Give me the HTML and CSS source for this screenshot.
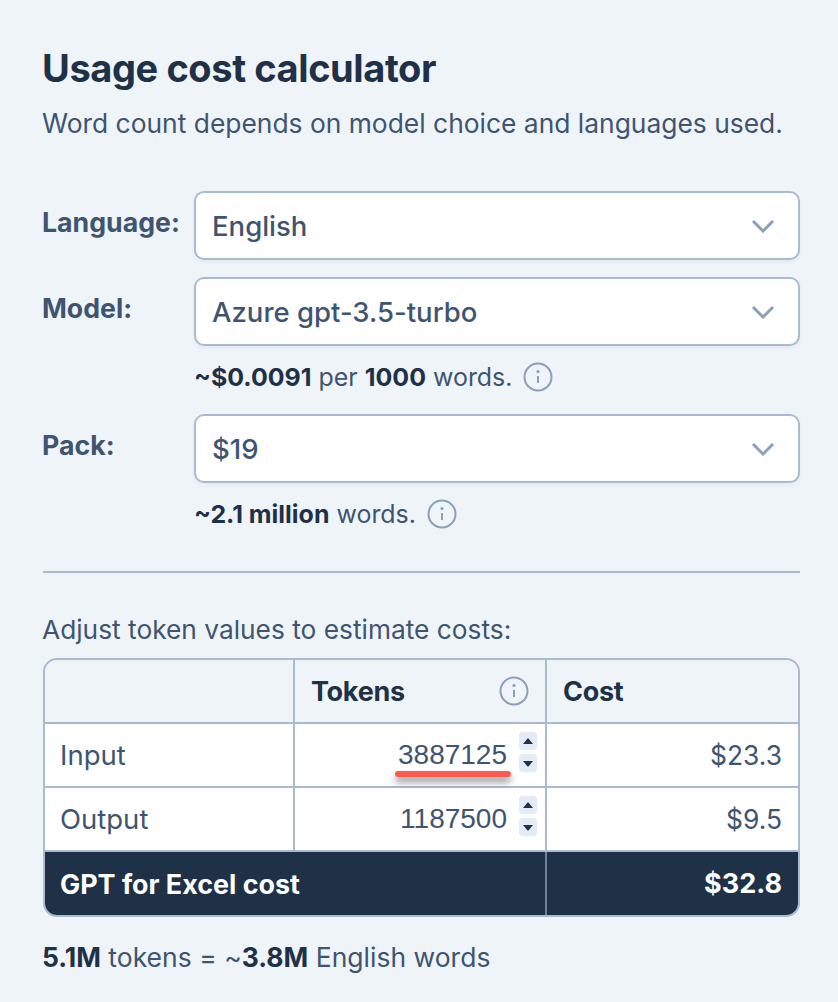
FILE: index.html
```html
<!DOCTYPE html>
<html lang="en">
<head>
<meta charset="utf-8">
<title>Usage cost calculator</title>
<link rel="stylesheet" href="styles.css">
</head>
<body>
<main class="calc">
  <h1 class="title">Usage cost calculator</h1>
  <p class="sub">Word count depends on model choice and languages used.</p>

  <div class="form">
    <div class="field">
      <label class="label">Language:</label>
      <div class="control">
        <div class="select"><span>English</span>
          <svg class="chev" viewBox="0 0 24 14"><path d="M2 2l10 10L22 2"/></svg></div>
      </div>
    </div>
    <div class="field">
      <label class="label">Model:</label>
      <div class="control">
        <div class="select"><span>Azure gpt-3.5-turbo</span>
          <svg class="chev" viewBox="0 0 24 14"><path d="M2 2l10 10L22 2"/></svg></div>
        <p class="note"><span><b>~$0.0091</b> per <b>1000</b> words.</span>
          <svg class="info" viewBox="0 0 30 30"><circle cx="15" cy="15" r="13.5"/><path d="M15 14v7"/><circle class="dot" cx="15" cy="9.5" r="1.6"/></svg></p>
      </div>
    </div>
    <div class="field">
      <label class="label">Pack:</label>
      <div class="control">
        <div class="select"><span>$19</span>
          <svg class="chev" viewBox="0 0 24 14"><path d="M2 2l10 10L22 2"/></svg></div>
        <p class="note"><span><b>~2.1 million</b> words.</span>
          <svg class="info" viewBox="0 0 30 30"><circle cx="15" cy="15" r="13.5"/><path d="M15 14v7"/><circle class="dot" cx="15" cy="9.5" r="1.6"/></svg></p>
      </div>
    </div>
  </div>

  <hr class="rule">

  <p class="adjust">Adjust token values to estimate costs:</p>

  <div class="table">
    <div class="row head">
      <div class="cell"></div>
      <div class="cell tokens-head"><span>Tokens</span>
        <svg class="info" viewBox="0 0 30 30"><circle cx="15" cy="15" r="13.5"/><path d="M15 14v7"/><circle class="dot" cx="15" cy="9.5" r="1.6"/></svg></div>
      <div class="cell">Cost</div>
    </div>
    <div class="row">
      <div class="cell">Input</div>
      <div class="cell num">
        <span class="value active">3887125</span>
        <span class="spin"><i class="up"></i><i class="down"></i></span>
      </div>
      <div class="cell right amount">$23.3</div>
    </div>
    <div class="row">
      <div class="cell">Output</div>
      <div class="cell num">
        <span class="value">1187500</span>
        <span class="spin"><i class="up"></i><i class="down"></i></span>
      </div>
      <div class="cell right amount">$9.5</div>
    </div>
    <div class="row total">
      <div class="cell wide">GPT for Excel cost</div>
      <div class="cell right">$32.8</div>
    </div>
  </div>

  <p class="summary"><b>5.1M</b> tokens = ~<b>3.8M</b> English words</p>
</main>
</body>
</html>
```
FILE: styles.css
```css
* { box-sizing: border-box; }
html, body { margin: 0; padding: 0; }
body {
  background: #eff4f9;
  color: #3e5470;
  font-family: Inter, "Liberation Sans", sans-serif;
  width: 838px;
  height: 1002px;
  overflow: hidden;
}
.calc { padding: 46px 38px 0 43px; }
.title { margin: 0 0 0 -1px; font-size: 38px; line-height: 44px; font-weight: 700; color: #1f3147; letter-spacing: -0.4px; }
.sub { margin: 15px 0 0 -1px; font-size: 26.4px; line-height: 36px; }
.form { margin-top: 50px; display: flex; flex-direction: column; gap: 17px; }
.field { display: flex; }
.label { width: 151px; flex: none; margin-left: -1px; margin-right: 1px; font-size: 26.7px; line-height: 36px; padding-top: 13px; font-weight: 700; }
.control { flex: 1; }
.select {
  height: 69px;
  background: #fff;
  border: 2px solid #a8bbd0;
  border-radius: 10px;
  box-shadow: 0 2px 4px rgba(30, 50, 80, 0.06);
  padding: 0 17px 0 16px;
  display: flex;
  align-items: center;
  justify-content: space-between;
  font-size: 27.5px;
  font-weight: 500;
}
.chev { width: 24px; height: 14px; fill: none; stroke: #8ba0b8; stroke-width: 3; margin-right: 6px; }
.note { margin: 13px 0 2px; font-size: 24.95px; line-height: 36px; display: flex; align-items: center; gap: 11px; }
.note b { color: #1f3147; font-weight: 700; }
.info { width: 30px; height: 30px; fill: none; stroke: #8ba0b8; stroke-width: 2; flex: none; }
.info .dot { fill: #8ba0b8; stroke: none; }
.rule { margin: 37px 0 0; border: 0; border-top: 2px solid #a8bbd0; }
.adjust { margin: 39px 0 0 -1px; font-size: 26.3px; line-height: 36px; }
.table {
  margin-top: 10px;
  border: 2px solid #a8bbd0;
  border-radius: 14px;
  overflow: hidden;
  background: #fff;
}
.row { display: grid; grid-template-columns: 250px 252px 1fr; height: 64px; border-bottom: 2px solid #a8bbd0; font-size: 27.5px; }
.row:last-child { border-bottom: 0; height: 63px; }
.cell { display: flex; align-items: center; padding: 0 16px; border-right: 2px solid #a8bbd0; }
.cell:first-child { padding-left: 15px; }
.cell:last-child { border-right: 0; }
.head { background: #eff4f9; color: #1f3147; font-weight: 700; font-size: 27px; letter-spacing: -0.3px; }
.tokens-head { justify-content: space-between; }
.right { justify-content: flex-end; }
.amount { font-size: 26.4px; }
.num { justify-content: flex-end; gap: 12px; padding-right: 8px; font-size: 28px; font-family: "Liberation Sans", sans-serif; }
.value { position: relative; }
.value.active::after {
  content: "";
  position: absolute;
  left: -3px;
  right: -4px;
  bottom: -6px;
  height: 6px;
  border-radius: 3px;
  background: #fe5a4f;
  box-shadow: 0 5px 7px rgba(0, 0, 0, 0.45);
}
.spin { display: flex; flex-direction: column; gap: 4px; margin-bottom: 6px; }
.spin i { width: 18px; height: 18px; border-radius: 4px; background: #e3ecf5; position: relative; display: block; }
.spin i::after {
  content: "";
  position: absolute;
  left: 4px;
  border-left: 5px solid transparent;
  border-right: 5px solid transparent;
}
.spin .up::after { top: 6px; border-bottom: 6px solid #1f3147; }
.spin .down::after { top: 7px; border-top: 6px solid #1f3147; }
.total { grid-template-columns: 502px 1fr; background: #1f3147; color: #fff; font-weight: 700; font-size: 26.9px; }
.total .cell { border-right-color: #6f849c; }
.total .cell:last-child { border-right: 0; font-size: 27px; }
.summary { margin: 22px 0 0 -1px; font-size: 26.5px; line-height: 36px; }
.summary b { color: #1f3147; font-weight: 700; }
```
